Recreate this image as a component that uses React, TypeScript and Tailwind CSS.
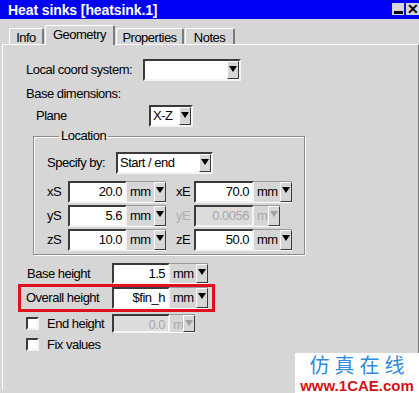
import React from "react";

const sunken =
  "border-2 border-t-[#3a3a3a] border-l-[#3a3a3a] border-b-[#f4f4f4] border-r-[#f4f4f4]";

function Arrow({ disabled = false }: { disabled?: boolean }) {
  return (
    <div className="w-[12px] self-stretch shrink-0 bg-[#d6d6d6] border border-t-white border-l-white border-r-[#3a3a3a] border-b-[#3a3a3a] flex items-start justify-center pt-[4px]">
      <svg width="8" height="6" viewBox="0 0 8 6">
        <path d="M0 0h8L4 6z" fill={disabled ? "#a0a0a0" : "#000"} />
      </svg>
    </div>
  );
}

function Dropdown({ w, text }: { w: string; text?: string }) {
  return (
    <div className={`${w} h-[22px] flex bg-white ${sunken}`}>
      <div className="flex-1 pl-[2px] leading-[18px]">{text}</div>
      <Arrow />
    </div>
  );
}

function Field({
  w,
  uw,
  value,
  unit,
  disabled = false,
}: {
  w: string;
  uw: string;
  value: string;
  unit: string;
  disabled?: boolean;
}) {
  return (
    <div className="flex h-full">
      <div
        className={`${w} h-full ${sunken} text-right pr-[3px] leading-[18px] ${
          disabled ? "bg-[#dcdcdc] text-[#a8a8a8]" : "bg-white"
        }`}
      >
        {value}
      </div>
      <div
        className={`${uw} h-full flex border-t border-t-[#9a9a9a] border-b border-b-white ${
          disabled ? "text-[#a8a8a8]" : ""
        }`}
      >
        <div className="flex-1 pl-[3px] leading-[20px]">{unit}</div>
        <Arrow disabled={disabled} />
      </div>
    </div>
  );
}

function Check() {
  return <div className={`w-[13px] h-[13px] bg-white ${sunken}`} />;
}

function Tab({ label, w, active = false }: { label: string; w: string; active?: boolean }) {
  return (
    <div
      className={`${w} ${
        active ? "h-[20px] mb-[-1px] bg-[#d6d6d6] z-10 pb-[2px]" : "h-[16px] pt-[1px]"
      } border-t border-l border-t-white border-l-white border-r-2 border-r-[#7a7a7a] rounded-t-[2px] flex items-center justify-center leading-none`}
    >
      {label}
    </div>
  );
}

export default function App() {
  return (
    <div className="w-[419px] h-[393px] relative overflow-hidden bg-[#d6d6d6] text-black text-[13px] tracking-[-0.5px] font-['Liberation_Sans',Arial,sans-serif]">
      {/* title bar */}
      <div className="h-[19px] bg-[#0000f6] flex items-center justify-between pl-[8px]">
        <span className="text-white font-bold text-[14px] tracking-[-0.1px] leading-none">
          Heat sinks [heatsink.1]
        </span>
        <div className="flex items-center gap-[2px] self-start pt-[3px]">
          <div className="w-[12px] h-[12px] bg-[#d6d6d6] flex items-end justify-center pb-[1px]">
            <div className="w-[9px] h-[3px] bg-black" />
          </div>
          <div className="w-[13px] h-[12px] bg-[#d6d6d6] flex items-center justify-center text-[14px] font-bold leading-none">
            ✕
          </div>
        </div>
      </div>

      {/* tabs */}
      <div className="h-[25px] flex items-end pl-[9px] gap-[1px]">
        <Tab label="Info" w="w-[35px]" />
        <Tab label="Geometry" w="w-[70px]" active />
        <Tab label="Properties" w="w-[68px]" />
        <Tab label="Notes" w="w-[50px]" />
      </div>

      {/* panel */}
      <div className="ml-[2px] w-[417px] h-[345px] border-t border-l border-t-white border-l-white border-r border-r-[#7a7a7a]">
        <div className="pl-[23px]">
          <div className="mt-[14px] flex items-center h-[22px]">
            <span className="w-[117px]">Local coord system:</span>
            <Dropdown w="w-[98px]" />
          </div>

          <div className="mt-[5px] h-[16px] leading-[16px]">Base dimensions:</div>

          <div className="mt-[3px] pl-[10px] flex items-center h-[22px]">
            <span className="w-[113px]">Plane</span>
            <Dropdown w="w-[44px]" text="X-Z" />
          </div>

          <fieldset className="mt-[1px] ml-[7px] w-[272px] border border-[#8c8c8c] shadow-[inset_1px_1px_0_#ffffff,1px_1px_0_#ffffff] pl-[13px] pb-[3px]">
            <legend className="ml-[12px] px-[2px] leading-[16px]">Location</legend>
            <div className="mt-[8px] flex items-center h-[22px]">
              <span className="w-[69px]">Specify by:</span>
              <Dropdown w="w-[97px]" text="Start / end" />
            </div>
            <div className="mt-[7px] flex flex-col gap-[2px]">
              {[
                ["xS", "20.0", "xE", "70.0", false],
                ["yS", "5.6", "yE", "0.0056", true],
                ["zS", "10.0", "zE", "50.0", false],
              ].map(([a, av, b, bv, dis]) => (
                <div key={a as string} className="flex items-center h-[22px]">
                  <span className="w-[21px]">{a}</span>
                  <Field w="w-[59px]" uw="w-[39px]" value={av as string} unit="mm" />
                  <span className={`ml-[10px] w-[18px] ${dis ? "text-[#b0b0b0]" : ""}`}>{b}</span>
                  {dis ? (
                    <Field w="w-[60px]" uw="w-[26px]" value={bv as string} unit="m" disabled />
                  ) : (
                    <Field w="w-[60px]" uw="w-[38px]" value={bv as string} unit="mm" />
                  )}
                </div>
              ))}
            </div>
          </fieldset>

          <div className="mt-[8px] pl-[1px] flex items-center h-[21px]">
            <span className="w-[85px]">Base height</span>
            <Field w="w-[58px]" uw="w-[38px]" value="1.5" unit="mm" />
          </div>

          <div className="ml-[-8px] w-[197px] h-[28px] border-[3px] border-[#e0101e] pl-[5px] flex items-center">
            <span className="w-[86px]">Overall height</span>
            <div className="h-[22px]">
              <Field w="w-[58px]" uw="w-[38px]" value="$fin_h" unit="mm" />
            </div>
          </div>

          <div className="mt-[2px] flex items-center h-[19px]">
            <Check />
            <span className="ml-[8px] w-[65px]">End height</span>
            <Field w="w-[58px]" uw="w-[25px]" value="0.0" unit="m" disabled />
          </div>

          <div className="mt-[2px] flex items-center h-[19px]">
            <Check />
            <span className="ml-[8px]">Fix values</span>
          </div>
        </div>
      </div>

      {/* watermark */}
      <div className="absolute left-[295px] top-[353px] w-[124px] h-[40px] bg-white flex flex-col items-center">
        <div className="mt-[2px] h-[20px] text-[20px] leading-[20px] tracking-[5px] pl-[5px] text-[#2f8ae0] font-['Noto_Sans_CJK_SC',sans-serif]">
          仿真在线
        </div>
        <div className="mt-[4px] h-[14px] text-[15px] leading-[14px] font-bold tracking-[0px] text-[#d01414] font-['Liberation_Sans',Arial,sans-serif]">
          www.1CAE.com
        </div>
      </div>
    </div>
  );
}
